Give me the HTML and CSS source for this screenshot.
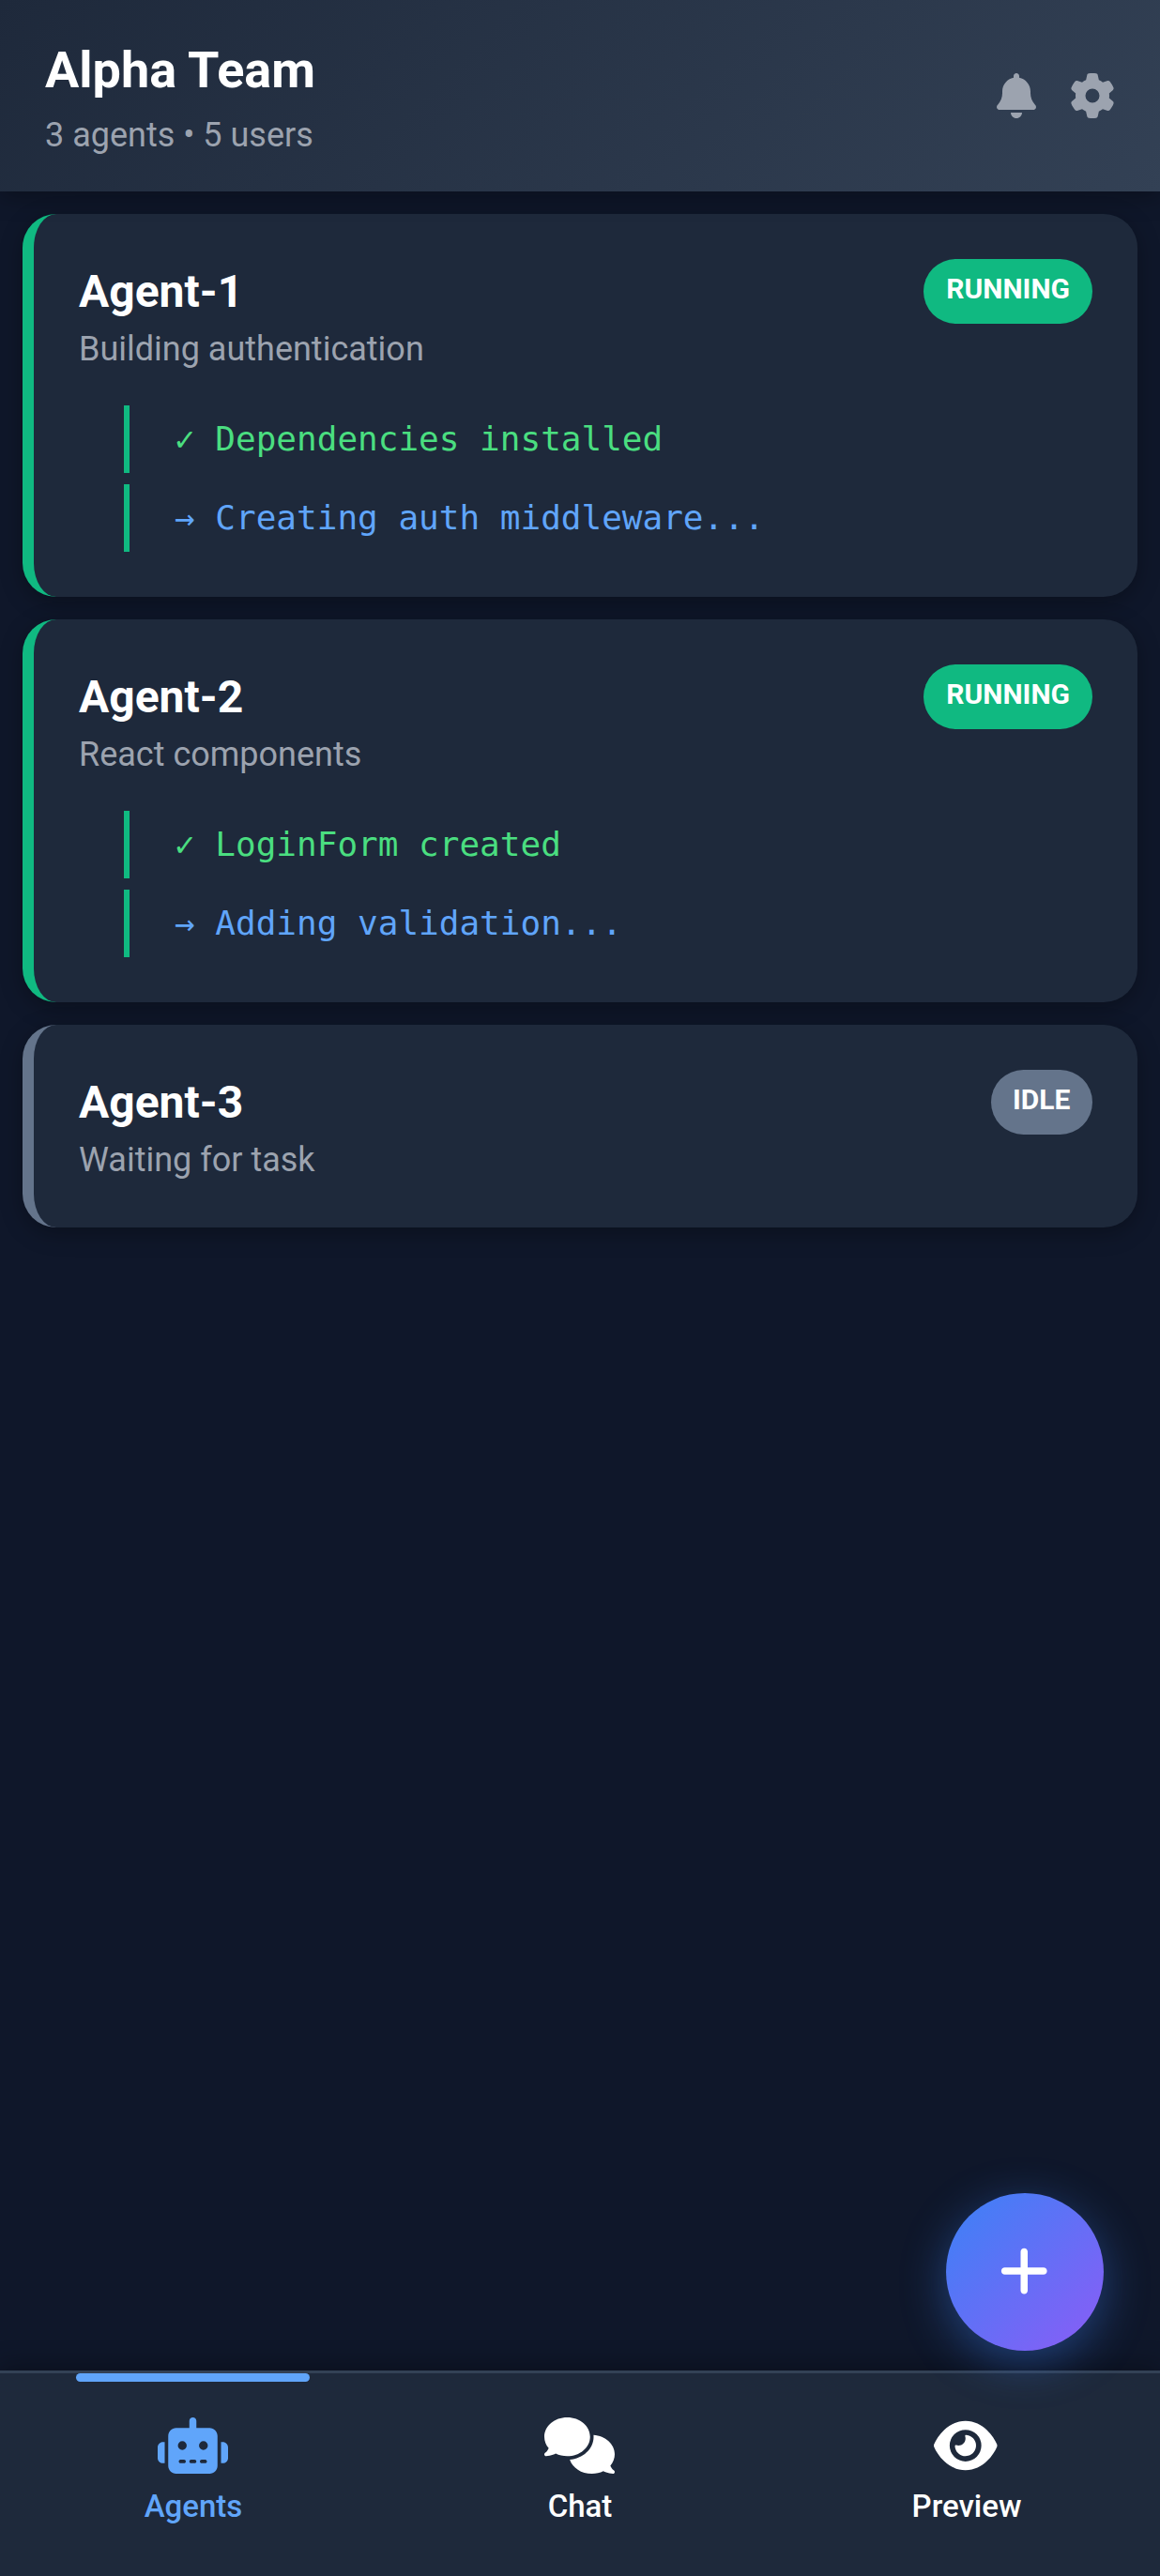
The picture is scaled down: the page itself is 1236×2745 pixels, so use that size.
FILE: index.html
```html
<!DOCTYPE html>
<html lang="en">
<head>
<meta charset="utf-8">
<meta name="viewport" content="width=device-width, initial-scale=1">
<title>Alpha Team</title>
<link rel="stylesheet" href="styles.css">
</head>
<body>
<div class="app">
  <header class="header">
    <div class="header-info">
      <h1 class="team-name">Alpha Team</h1>
      <p class="team-meta">3 agents • 5 users</p>
    </div>
    <div class="header-actions">
      <svg class="icon-bell" viewBox="0 0 448 512" fill="currentColor"><path d="M224 0c-17.7 0-32 14.3-32 32V51.2C119 66 64 130.600 64 208v18.800c0 47-17.300 92.400-48.500 127.600l-7.400 8.300c-8.400 9.400-10.400 22.900-5.300 34.400S19.400 416 32 416H416c12.600 0 24-7.400 29.200-18.900s3.100-25-5.300-34.400l-7.400-8.300C401.300 319.200 384 273.900 384 226.800V208c0-77.400-55-142-128-156.800V32c0-17.700-14.300-32-32-32zm45.300 493.300c12-12 18.700-28.300 18.700-45.300H160c0 17 6.700 33.300 18.700 45.300s28.300 18.700 45.300 18.700s33.300-6.700 45.300-18.700z"/></svg>
      <svg class="icon-gear" viewBox="0 0 512 512" fill="currentColor"><path d="M495.900 166.600c3.200 8.700 .5 18.400-6.400 24.600l-43.300 39.400c1.100 8.300 1.700 16.800 1.700 25.400s-.6 17.100-1.700 25.400l43.300 39.400c6.900 6.200 9.600 15.900 6.400 24.600c-4.400 11.900-9.700 23.300-15.800 34.300l-4.700 8.100c-6.600 11-14 21.400-22.100 31.200c-5.900 7.200-15.700 9.600-24.500 6.800l-55.700-17.700c-13.400 10.300-28.200 18.900-44 25.400l-12.500 57.100c-2 9.100-9 16.300-18.200 17.800c-13.800 2.300-28 3.500-42.500 3.500s-28.700-1.200-42.500-3.500c-9.200-1.500-16.200-8.700-18.200-17.800l-12.500-57.100c-15.800-6.500-30.600-15.100-44-25.400L83.100 425.900c-8.800 2.800-18.600 .3-24.500-6.800c-8.100-9.800-15.500-20.200-22.100-31.200l-4.700-8.100c-6.100-11-11.400-22.400-15.800-34.300c-3.200-8.700-.5-18.400 6.400-24.600l43.300-39.400C64.600 273.100 64 264.600 64 256s.6-17.100 1.700-25.400L22.400 191.200c-6.900-6.200-9.600-15.900-6.400-24.600c4.400-11.900 9.700-23.300 15.800-34.300l4.700-8.100c6.600-11 14-21.400 22.100-31.200c5.900-7.200 15.700-9.600 24.500-6.800l55.700 17.700c13.400-10.300 28.200-18.900 44-25.400l12.500-57.100c2-9.100 9-16.300 18.200-17.800C227.300 1.200 241.500 0 256 0s28.700 1.200 42.500 3.500c9.200 1.500 16.200 8.700 18.200 17.800l12.500 57.100c15.800 6.500 30.600 15.100 44 25.400l55.700-17.700c8.800-2.800 18.600-.3 24.500 6.800c8.100 9.800 15.500 20.200 22.100 31.200l4.700 8.100c6.100 11 11.400 22.400 15.800 34.300zM256 336a80 80 0 1 0 0-160 80 80 0 1 0 0 160z"/></svg>
    </div>
  </header>

  <main class="agents">
    <section class="card running">
      <div class="card-head">
        <div>
          <h2 class="agent-name">Agent-1</h2>
          <p class="agent-task">Building authentication</p>
        </div>
        <span class="badge">RUNNING</span>
      </div>
      <div class="log">
        <div class="log-line done">✓ Dependencies installed</div>
        <div class="log-line active">→ Creating auth middleware...</div>
      </div>
    </section>
    <section class="card running">
      <div class="card-head">
        <div>
          <h2 class="agent-name">Agent-2</h2>
          <p class="agent-task">React components</p>
        </div>
        <span class="badge">RUNNING</span>
      </div>
      <div class="log">
        <div class="log-line done">✓ LoginForm created</div>
        <div class="log-line active">→ Adding validation...</div>
      </div>
    </section>
    <section class="card idle">
      <div class="card-head">
        <div>
          <h2 class="agent-name">Agent-3</h2>
          <p class="agent-task">Waiting for task</p>
        </div>
        <span class="badge">IDLE</span>
      </div>
    </section>
  </main>

  <nav class="tabs">
    <a class="tab selected">
      <svg class="icon-wide" viewBox="0 0 640 512" fill="currentColor"><path d="M320 0c17.700 0 32 14.300 32 32V96H472c39.800 0 72 32.200 72 72V440c0 39.800-32.200 72-72 72H168c-39.800 0-72-32.200-72-72V168c0-39.800 32.200-72 72-72H288V32c0-17.700 14.300-32 32-32zM208 384c-8.800 0-16 7.200-16 16s7.200 16 16 16h32c8.800 0 16-7.200 16-16s-7.200-16-16-16H208zm96 0c-8.800 0-16 7.200-16 16s7.200 16 16 16h32c8.800 0 16-7.200 16-16s-7.200-16-16-16H304zm96 0c-8.800 0-16 7.200-16 16s7.200 16 16 16h32c8.800 0 16-7.200 16-16s-7.200-16-16-16H400zM264 256a40 40 0 1 0 -80 0 40 40 0 1 0 80 0zm152 40a40 40 0 1 0 0-80 40 40 0 1 0 0 80zM48 224H64V416H48c-26.500 0-48-21.500-48-48V272c0-26.500 21.500-48 48-48zm544 0c26.500 0 48 21.500 48 48v96c0 26.500-21.500 48-48 48H576V224h16z"/></svg>
      <span class="tab-label">Agents</span>
    </a>
    <a class="tab">
      <svg class="icon-wide" viewBox="0 0 640 512" fill="currentColor"><path d="M208 352c114.900 0 208-78.800 208-176S322.900 0 208 0S0 78.800 0 176c0 38.600 14.700 74.300 39.600 103.400c-3.500 9.400-8.700 17.700-14.200 24.700c-4.800 6.200-9.700 11-13.300 14.300c-1.800 1.600-3.300 2.900-4.300 3.700c-.5 .4-.9 .7-1.100 .8l-.2 .2C1 327.200-1.400 334.400 .8 340.900S9.100 352 16 352c21.800 0 43.800-5.600 62.100-12.500c9.200-3.500 17.800-7.400 25.200-11.400C134.100 343.300 169.800 352 208 352zM448 176c0 112.300-99.100 196.900-216.500 207C255.800 457.400 336.400 512 432 512c38.200 0 73.900-8.700 104.700-23.900c7.500 4 16 7.900 25.200 11.400c18.300 6.900 40.300 12.500 62.100 12.500c6.900 0 13.100-4.500 15.200-11.100c2.100-6.600-.2-13.800-5.800-17.900l-.2-.2c-.2-.2-.6-.4-1.100-.8c-1-.8-2.500-2-4.300-3.700c-3.600-3.300-8.500-8.100-13.300-14.300c-5.500-7-10.700-15.400-14.200-24.700c24.900-29 39.600-64.700 39.600-103.400c0-92.800-84.900-168.900-192.600-175.500c.4 5.100 .6 10.300 .6 15.500z"/></svg>
      <span class="tab-label">Chat</span>
    </a>
    <a class="tab">
      <svg class="icon-eye" viewBox="0 0 576 512" fill="currentColor"><path d="M288 32c-80.800 0-145.500 36.800-192.600 80.600C48.600 156 17.300 208 2.500 243.700c-3.300 7.900-3.300 16.700 0 24.600C17.300 304 48.600 356 95.400 399.400C142.500 443.200 207.200 480 288 480s145.500-36.800 192.600-80.600c46.800-43.500 78.100-95.400 93-131.100c3.300-7.900 3.300-16.700 0-24.600c-14.900-35.700-46.200-87.700-93-131.100C433.500 68.800 368.800 32 288 32zM144 256a144 144 0 1 1 288 0 144 144 0 1 1 -288 0zm144-64c0 35.300-28.700 64-64 64c-7.100 0-13.900-1.200-20.300-3.300c-5.500-1.800-11.900 1.600-11.700 7.400c.3 6.900 1.300 13.800 3.200 20.700c13.700 51.200 66.400 81.600 117.600 67.900s81.600-66.400 67.900-117.600c-11.100-41.500-47.800-69.400-88.600-71.100c-5.800-.2-9.200 6.100-7.400 11.700c2.100 6.400 3.300 13.200 3.300 20.300z"/></svg>
      <span class="tab-label">Preview</span>
    </a>
  </nav>

  <button class="fab" aria-label="Add agent">
    <svg class="icon-plus" viewBox="0 0 448 512" fill="currentColor"><path d="M256 80c0-17.700-14.300-32-32-32s-32 14.300-32 32V224H48c-17.700 0-32 14.300-32 32s14.300 32 32 32H192V432c0 17.700 14.300 32 32 32s32-14.300 32-32V288H400c17.700 0 32-14.300 32-32s-14.300-32-32-32H256V80z"/></svg>
  </button>
</div>
</body>
</html>
```

FILE: styles.css
```css
* { box-sizing: border-box; margin: 0; padding: 0; }

body {
  background: #0f172a;
  color: #fff;
  font-family: Roboto, sans-serif;
}

.app {
  position: relative;
  display: flex;
  flex-direction: column;
  height: 2745px;
  overflow: hidden;
}

.header {
  position: relative;
  z-index: 1;
  display: flex;
  align-items: center;
  justify-content: space-between;
  height: 204px;
  padding: 36px 48px;
  background: linear-gradient(135deg, #1e293b 0%, #334155 100%);
  box-shadow: 0 6px 24px rgba(0, 0, 0, 0.3);
}

.header-info { padding-top: 2px; }
.team-name { font-size: 54px; font-weight: 700; line-height: 76px; }
.team-meta { margin-top: 6px; color: #9ca3af; font-size: 36px; line-height: 50px; }

.header-actions { display: flex; gap: 36px; color: #9ca3af; }
.icon-bell { width: 42px; height: 48px; }
.icon-gear { width: 48px; height: 48px; }

.agents {
  flex: 1;
  display: flex;
  flex-direction: column;
  gap: 24px;
  padding: 24px;
}

.card {
  padding: 48px;
  background: #1e293b;
  border-left: 12px solid #10b981;
  border-radius: 36px;
  box-shadow: 0 6px 24px rgba(0, 0, 0, 0.3);
}
.card.idle { border-left-color: #64748b; }

.card-head {
  display: flex;
  align-items: flex-start;
  justify-content: space-between;
}

.agent-name { font-size: 48px; font-weight: 700; line-height: 70px; }
.agent-task { padding-top: 2px; color: #9ca3af; font-size: 36px; line-height: 48px; }

.badge {
  height: 69px;
  padding: 12px 24px;
  border-radius: 36px;
  background: #10b981;
  font-size: 30px;
  font-weight: 700;
  line-height: 39px;
}
.idle .badge { width: 108px; padding: 12px 0 12px 23px; background: #64748b; }

.log {
  display: flex;
  flex-direction: column;
  gap: 12px;
  margin: 36px 0 0 48px;
}
.log-line {
  padding-left: 48px;
  border-left: 6px solid #10b981;
  font-family: "DejaVu Sans Mono", monospace;
  font-size: 36px;
  line-height: 72px;
}
.done { color: #4ade80; }
.active { color: #60a5fa; }

.tabs {
  display: flex;
  height: 219px;
  background: #1e293b;
  border-top: 3px solid #334155;
  box-shadow: 0 -6px 24px rgba(0, 0, 0, 0.3);
}
.tab {
  position: relative;
  flex: 1;
  display: flex;
  flex-direction: column;
  align-items: center;
  gap: 12px;
  padding-top: 47px;
}
.tab.selected { color: #60a5fa; }
.tab.selected::before {
  content: "";
  position: absolute;
  top: 0;
  left: 81px;
  width: 249px;
  height: 9px;
  border-radius: 4.5px;
  background: #60a5fa;
}
.icon-wide { width: 75px; height: 60px; margin-right: 1px; }
.icon-eye { width: 67.5px; height: 60px; margin-right: 2px; }
.tab-label { font-size: 33px; font-weight: 500; line-height: 46px; }

.fab {
  position: absolute;
  right: 60px;
  bottom: 240px;
  display: flex;
  align-items: center;
  justify-content: center;
  width: 168px;
  height: 168px;
  border: 0;
  border-radius: 50%;
  background: linear-gradient(135deg, #3b82f6, #8b5cf6);
  box-shadow: 0 12px 48px rgba(59, 130, 246, 0.4);
  color: #fff;
}
.icon-plus { width: 52.5px; height: 60px; margin: 0 1px 3px 0; }
```
